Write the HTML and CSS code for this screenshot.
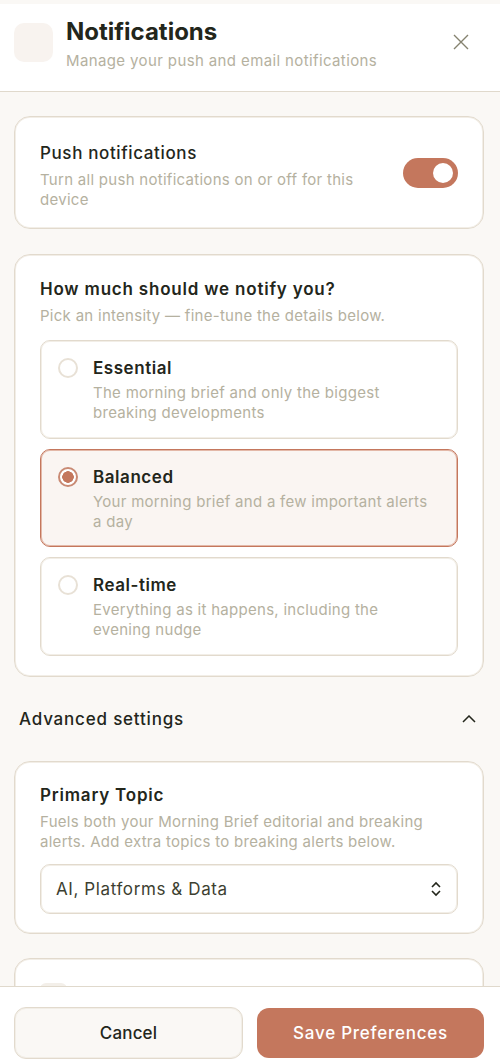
FILE: index.html
```html
<!DOCTYPE html>
<html lang="en">
<head>
<meta charset="utf-8">
<title>Notifications</title>
<link rel="stylesheet" href="styles.css">
</head>
<body>
<div class="sheet">
  <header class="header">
    <div class="header-icon"></div>
    <div class="header-text">
      <h1 class="title">Notifications</h1>
      <p class="subtitle">Manage your push and email notifications</p>
    </div>
    <svg class="close" viewBox="0 0 16 16" aria-label="Close"><path d="M1 1l14 14M15 1L1 15"/></svg>
  </header>
  <main class="content">
    <section class="card push-card">
      <div class="push-text">
        <h2 class="push-title">Push notifications</h2>
        <p class="muted">Turn all push notifications on or off for this device</p>
      </div>
      <div class="toggle"><span class="knob"></span></div>
    </section>
    <section class="card intensity-card">
      <h2 class="card-title">How much should we notify you?</h2>
      <p class="muted">Pick an intensity — fine-tune the details below.</p>
      <div class="options">
        <div class="option">
          <span class="radio"></span>
          <div><h3 class="option-title">Essential</h3><p class="muted">The morning brief and only the biggest breaking developments</p></div>
        </div>
        <div class="option selected">
          <span class="radio on"></span>
          <div><h3 class="option-title">Balanced</h3><p class="muted">Your morning brief and a few important alerts a day</p></div>
        </div>
        <div class="option">
          <span class="radio"></span>
          <div><h3 class="option-title">Real-time</h3><p class="muted">Everything as it happens, including the evening nudge</p></div>
        </div>
      </div>
    </section>
    <div class="advanced">
      <span>Advanced settings</span>
      <svg class="chevron" viewBox="0 0 14 8"><path d="M1 7l6-6 6 6"/></svg>
    </div>
    <section class="card topic-card">
      <h2 class="card-title">Primary Topic</h2>
      <p class="muted">Fuels both your Morning Brief editorial and breaking alerts. Add extra topics to breaking alerts below.</p>
      <div class="select">
        <span>AI, Platforms &amp; Data</span>
        <svg class="updown" viewBox="0 0 10 16"><path d="M1 6l4-4 4 4M1 10l4 4 4-4"/></svg>
      </div>
    </section>
    <section class="card peek-card"><div class="peek-icon"></div></section>
  </main>
  <footer class="footer">
    <button class="btn cancel">Cancel</button>
    <button class="btn save">Save Preferences</button>
  </footer>
</div>
</body>
</html>
```
FILE: styles.css
```css
* { box-sizing: border-box; }
html, body { margin: 0; padding: 0; }
body { background: #faf8f5; font-family: Inter, "Liberation Sans", sans-serif; color: #23261b; }
h1, h2, h3, p { margin: 0; }
.sheet { height: 1059px; width: 500px; display: flex; flex-direction: column; padding-top: 4px; overflow: hidden; }
.header { height: 88px; flex: none; background: #fff; border-bottom: 1px solid #e0d9cc; display: flex; align-items: flex-start; padding: 0 31px 0 14px; }
.header-icon { width: 39px; height: 39px; margin-top: 19px; border-radius: 10px; background: #f8f3ef; flex: none; }
.header-text { flex: 1; margin-left: 13px; margin-top: 12px; }
.title { font-size: 24px; line-height: 32px; font-weight: 700; color: #23261b; }
.subtitle { font-size: 15px; line-height: 22px; margin-top: 2px; color: #b5b1a0; letter-spacing: 0.38px; }
.close { width: 16px; height: 16px; margin-top: 30px; flex: none; fill: none; stroke: #85826f; stroke-width: 1.4; }
.content { flex: 1; min-height: 0; overflow: hidden; padding: 24px 16px 0 14px; }
.card { background: #fff; border: 1px solid #e2dacd; box-shadow: inset 0 0 0 1px #f2eee7; border-radius: 16px; }
.muted { font-size: 15px; line-height: 20px; color: #b5b1a0; letter-spacing: 0.28px; }
.push-card { height: 113px; display: flex; align-items: center; padding: 0 25px; margin-bottom: 25px; }
.push-text { flex: 1; padding: 5px 40px 0 0; }
.push-title { font-size: 17px; line-height: 24px; font-weight: 500; margin-bottom: 5px; letter-spacing: 0.62px; }
.toggle { width: 55px; height: 30px; border-radius: 15px; background: #c4775d; display: flex; align-items: center; justify-content: flex-end; padding-right: 5px; flex: none; }
.knob { width: 20px; height: 20px; border-radius: 50%; background: #fff; }
.intensity-card { height: 423px; padding: 22px 25px 0; }
.card-title { font-size: 17px; line-height: 24px; font-weight: 600; margin-bottom: 5px; letter-spacing: 0.8px; }
.options { display: flex; flex-direction: column; gap: 10px; margin-top: 14px; }
.option { height: 98.5px; border: 1px solid #e2dacd; box-shadow: inset 0 0 0 1px #f2eee7; border-radius: 10px; background: #fff; display: flex; gap: 15px; padding: 15px 17px 0; }
.option.selected { background: #faf5f2; border-color: #c4775d; box-shadow: inset 0 0 0 1px #e3b8a8; }
.radio { width: 20px; height: 20px; border-radius: 50%; border: 2px solid #e8e1d6; background: #fff; flex: none; margin-top: 2px; }
.radio.on { border-color: #c98a74; background: radial-gradient(circle, #c4775d 0 5.5px, #fff 6px); }
.option-title { font-size: 17px; line-height: 24px; font-weight: 600; margin-bottom: 3px; letter-spacing: 0.55px; }
.advanced { height: 84px; display: flex; align-items: center; justify-content: space-between; padding: 0 8px 0 5px; font-size: 17px; font-weight: 500; letter-spacing: 0.8px; }
.chevron { width: 14px; height: 8px; fill: none; stroke: #23261b; stroke-width: 1.5; }
.topic-card { height: 173px; padding: 21px 25px 0; margin-bottom: 24px; }
.select { height: 50px; margin-top: 12px; border: 1px solid #e2dacd; box-shadow: inset 0 0 0 1px #f2eee7; border-radius: 10px; display: flex; align-items: center; justify-content: space-between; padding: 0 16px 0 15px; font-size: 17px; color: #3d3f31; letter-spacing: 0.6px; }
.updown { width: 10px; height: 16px; fill: none; stroke: #23261b; stroke-width: 1.6; }
.peek-card { height: 120px; padding: 24px 25px 0; }
.peek-icon { width: 27px; height: 27px; border-radius: 6px; background: #f3efe9; }
.footer { flex: none; height: 73px; background: #fff; border-top: 1px solid #e0d9cc; display: flex; gap: 14px; padding: 20px 16px 0 14px; }
.btn { height: 52px; border-radius: 12px; font-family: inherit; font-size: 17px; font-weight: 500; }
.cancel { width: 229px; background: #faf8f5; border: 1px solid #e2dacd; box-shadow: inset 0 0 0 1px #f2eee7; color: #23261b; letter-spacing: 0.15px; }
.save { flex: 1; background: #c4775d; border: 0; color: #fff; height: 50px; margin-top: 1px; letter-spacing: 0.75px; }
```
